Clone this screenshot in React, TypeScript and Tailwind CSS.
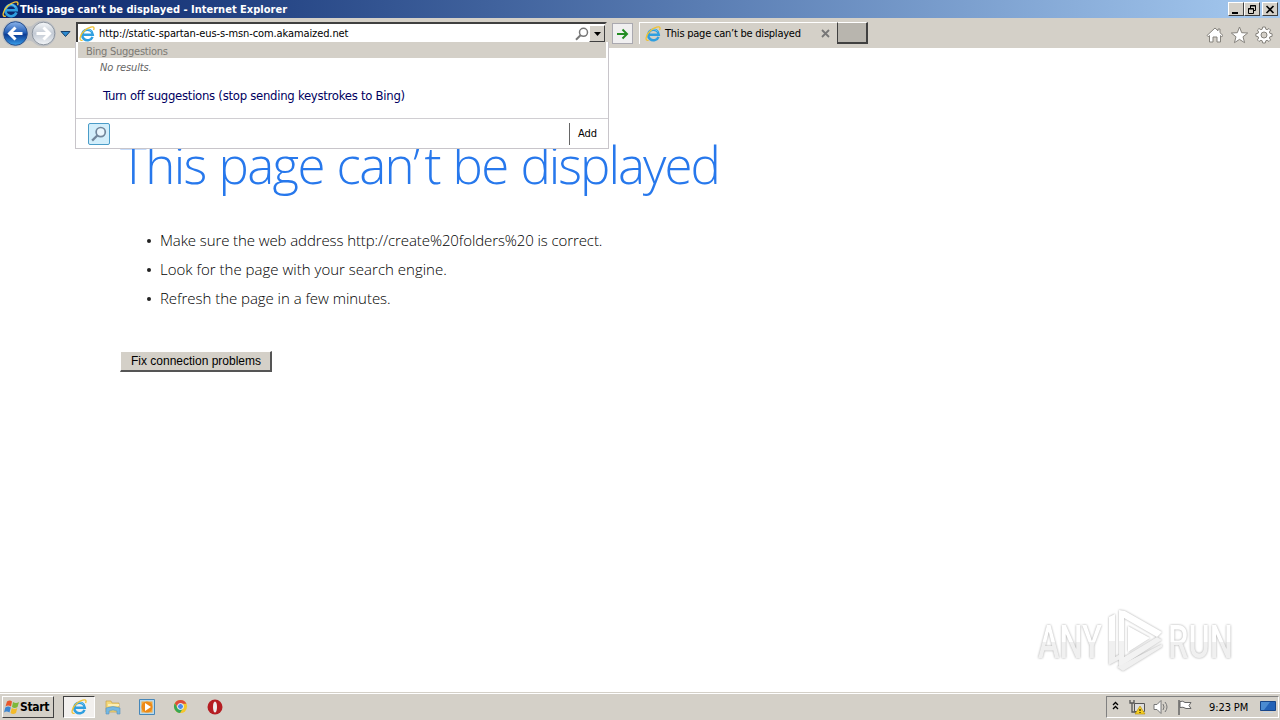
import React from "react";

const IeIcon = ({ size = 16 }: { size?: number }) => (
  <svg width={size} height={size} viewBox="0 0 16 16" className="shrink-0">
    <path d="M13.500 10.800A5.300 5.300 0 1 1 13.800 8.700H4.500" fill="none" stroke="#2f9fe0" strokeWidth="2.500" />
    <path d="M12.600 5.600A5 5 0 0 0 4 6" fill="none" stroke="#8ad4f8" strokeWidth="0.8" />
    <path d="M3.600 14.300C-.6 15.500.6 9 5.600 4.500C9.800.8 14.600-.2 15 1.900C15.100 2.600 14.900 3.300 14.600 4" fill="none" stroke="#f0c233" strokeWidth="1.300" />
  </svg>
);

const NavArrows = () => (
  <svg width="74" height="30" viewBox="0 0 74 30" className="shrink-0">
    <defs>
      <linearGradient id="back" x1="0" y1="0" x2="0" y2="1">
        <stop offset="0" stopColor="#8cb4ea" />
        <stop offset=".45" stopColor="#2560b8" />
        <stop offset=".55" stopColor="#0c3c94" />
        <stop offset="1" stopColor="#39a0ec" />
      </linearGradient>
      <linearGradient id="fwd" x1="0" y1="0" x2="0" y2="1">
        <stop offset="0" stopColor="#f6f8fa" />
        <stop offset=".5" stopColor="#c3cad4" />
        <stop offset="1" stopColor="#f2f5f8" />
      </linearGradient>
    </defs>
    <path d="M2 15a13 13 0 0 1 23-8q4 3 8 0a13 13 0 1 1 0 17q-4-3-8 0a13 13 0 0 1-23-9" fill="#bfc1c4" />
    <circle cx="15.5" cy="15.5" r="11.8" fill="url(#back)" stroke="#264f8d" />
    <circle cx="43.5" cy="15.5" r="11.3" fill="url(#fwd)" stroke="#8e96a0" />
    <path d="M22.500 15.500H10M15.500 9.500l-6 6 6 6" fill="none" stroke="#fff" strokeWidth="3" />
    <path d="M36.500 15.500H49M43.500 9.500l6 6-6 6" fill="none" stroke="#fff" strokeWidth="3" />
    <path d="M61 13.500h9l-4.500 5z" fill="#2c8ad0" stroke="#173e68" />
  </svg>
);

const Search = ({ color, fill = "none", size = 14 }: { color: string; fill?: string; size?: number }) => (
  <svg width={size} height={size} viewBox="0 0 14 14">
    <circle cx="8.5" cy="5.3" r="4" fill={fill} stroke={color} strokeWidth="1.5" />
    <path d="M5.500 8.300L1 12.800" stroke={color} strokeWidth="2" />
  </svg>
);

const caption =
  "h-[14px] w-4 bg-[#d4d0c8] border border-t-white border-l-white border-r-[#404040] border-b-[#404040] flex items-center justify-center";

const TitleBar = () => (
  <div className="flex h-[18px] items-center bg-linear-to-r from-[#0a246a] to-[#a6caf0] pl-0.5 pr-0.5">
    <IeIcon size={17} />
    <span className="ml-px whitespace-nowrap pt-px font-['DejaVu_Sans_Condensed','DejaVu_Sans',sans-serif] text-[11px] font-bold leading-[17px] tracking-[0.01px] text-white">
      This page can’t be displayed - Internet Explorer
    </span>
    <div className="ml-auto flex">
      <div className={caption}>
        <svg width="12" height="11"><path d="M2 8h6v2H2z" /></svg>
      </div>
      <div className={caption}>
        <svg width="12" height="11" fill="none" stroke="#000">
          <path d="M4.500 4V1.500h5v5H8M4 2h6M2.500 4.500h5v5h-5zM2 5h6" />
        </svg>
      </div>
      <div className={`${caption} ml-0.5`}>
        <svg width="12" height="11" stroke="#000" strokeWidth="1.6"><path d="M2.500 2l7 7M9.500 2l-7 7" /></svg>
      </div>
    </div>
  </div>
);

const Toolbar = () => (
  <div className="flex h-[30px] bg-[#d4d0c8]">
    <NavArrows />
    <div className="ml-0.5 mt-1 flex h-[21px] w-[531px] items-center border-2 border-b-0 border-[#404040] border-r-[#d4d0c8] bg-white">
      <span className="ml-px"><IeIcon /></span>
      <span className="ml-1 whitespace-nowrap pt-0.5 text-[11px] tracking-[-0.1px] text-black">
        http://static-spartan-eus-s-msn-com.akamaized.net
      </span>
      <span className="ml-auto"><Search color="#777" /></span>
      <div className="flex h-[17px] w-4 items-center justify-center border border-b-[#404040] border-l-white border-r-[#404040] border-t-white bg-[#d4d0c8]">
        <svg width="7" height="4"><path d="M0 0h7L3.500 4z" /></svg>
      </div>
    </div>
    <div className="ml-[5px] mt-[5px] flex size-[21px] items-center justify-center border border-[#aaa9b0] bg-[#f0eff0]">
      <svg width="13" height="12" fill="none" stroke="#238c22" strokeWidth="2"><path d="M1 6h10M6.500 1.500L11 6l-4.500 4.500" /></svg>
    </div>
    <div className="ml-[6px] mt-1 flex h-[22px] w-[198px] items-center border-l border-t border-white pl-[5px]">
      <IeIcon />
      <span className="ml-1 whitespace-nowrap pt-0.5 text-[11px] tracking-[-0.23px]">This page can’t be displayed</span>
      <svg className="ml-auto mr-[7px]" width="9" height="9" stroke="#777" strokeWidth="1.8"><path d="M1 1l7 7M8 1L1 8" /></svg>
    </div>
    <div className="mt-1 h-[22px] w-[31px] border-b-2 border-l border-r-2 border-t border-[#404040] border-t-white bg-[#b8b5ae]" />
    <svg className="ml-auto mr-[6px] mt-[8px]" width="68" height="18" viewBox="0 0 68 18" fill="#fff" stroke="#85827c" strokeWidth="1">
      <path d="M1 9.500L9 2l3 2.800V3h2v3.700l3 2.800-1.200 1.200-1.300-1.100V16H11v-5H7v5H3.500V9.600L2.200 10.700z" />
      <path d="M33.500 1l2.200 5.700 6 .3-4.700 3.800 1.600 5.900-5.100-3.300-5.100 3.300 1.600-5.900-4.700-3.800 6-.3z" />
      <g transform="translate(58 9)">
        <path d="M-1.300-8h2.600l.5 2.200 1.300.5L5-6.500 6.600-4.900 5.400-3l.5 1.300 2.200.5v2.500l-2.200.5L5.400 3l1.200 1.900L5 6.500 3.100 5.300l-1.300.5L1.300 8h-2.600l-.5-2.200-1.300-.5L-5 6.500-6.600 4.900-5.400 3l-.5-1.300-2.200-.5v-2.500l2.200-.5L-5.400-3l-1.200-1.900L-5-6.500l1.900 1.200 1.300-.5z" />
        <circle r="3" fill="#d4d0c8" />
      </g>
    </svg>
  </div>
);

const Suggestions = () => (
  <div className="absolute left-[75px] top-[42px] flex h-[107px] w-[534px] flex-col border border-t-0 border-[#c8c5ca] bg-white text-[11px]">
    <div className="ml-0.5 mr-0.5 h-4 bg-[#d4d0c8] pl-2 leading-[20px] tracking-[-0.25px] text-[#7b7974]">Bing Suggestions</div>
    <div className="h-[18px] pl-6 leading-[20px] italic tracking-[-0.15px] text-[#666]">No results.</div>
    <div className="flex h-[42px] items-center pb-0.5 pl-[27px] text-[13px] tracking-[-0.28px] text-[#00005f]">
      Turn off suggestions (stop sending keystrokes to Bing)
    </div>
    <div className="flex flex-1 items-center border-t border-[#d0ced2] pl-3">
      <div className="flex size-[22px] items-center justify-center rounded-[2px] border border-[#4a9cc8] bg-[#d2eefb]">
        <Search color="#71869b" fill="#e9f6fd" size={16} />
      </div>
      <div className="ml-auto flex h-[22px] w-[39px] items-center border-l border-[#666] pl-2 pt-0.5 text-black">Add</div>
    </div>
  </div>
);

const tips = [
  { text: "Make sure the web address http://create%20folders%20 is correct.", tracking: "tracking-[-0.1px]" },
  { text: "Look for the page with your search engine.", tracking: "tracking-[0.01px]" },
  { text: "Refresh the page in a few minutes.", tracking: "tracking-[-0.04px]" },
];

const ErrorPage = () => (
  <main className="h-[644px] bg-white pl-[120px] pt-[82px]">
    <h1 className="whitespace-nowrap font-['Open_Sans',sans-serif] text-[51px] font-light leading-[69px] tracking-[-1.6px] text-[#2778ec] [word-spacing:1px]">
      This page can<span className="tracking-[4px]">’</span>t be <span className="tracking-[-2px]">displayed</span>
    </h1>
    <ul className="mt-[27px] font-['Open_Sans',sans-serif] text-[15px] font-light leading-[29px] text-black">
      {tips.map((tip) => (
        <li key={tip.text} className="flex items-center">
          <span className="ml-[27px] mr-[9px] size-1 rounded-full bg-[#222]" />
          <span className={`whitespace-nowrap ${tip.tracking}`}>{tip.text}</span>
        </li>
      ))}
    </ul>
    <button className="mt-[38px] h-[21px] w-[152px] border border-b-2 border-r-2 border-b-[#555] border-l-white border-r-[#555] border-t-white bg-[#d4d0c8] pl-px font-['Liberation_Sans',sans-serif] text-[12px] leading-[17px]">
      Fix connection problems
    </button>
  </main>
);

const word =
  "inline-block origin-left scale-x-[0.69] bg-linear-to-b from-white from-50% to-[#f0f0f0] to-52% bg-clip-text text-transparent";

const Watermark = () => (
  <div className="absolute left-[1038px] top-[608px] flex h-[66px] items-center font-['Roboto',sans-serif] text-[47px] font-medium leading-none drop-shadow-[0_0_1px_#a8a8a8]">
    <span className="w-[67px]"><span className={word}>ANY</span></span>
    <svg className="shrink-0" width="60" height="66" viewBox="0 0 60 66" strokeLinejoin="round">
      <path d="M4 9l6-3v44l-6 6z" fill="#fff" />
      <path d="M4 33h6v16l7-4v5L4 57z" fill="#f0f0f0" />
      <path d="M14 2l6 1 37 21-5 5-33-19v39l-5 3z" fill="#fff" />
      <path d="M14 33h5v16l33-20 5 3-39 25-4 2z" fill="#f2f2f2" />
      <path d="M57 36v3L18 63l-6-4z" fill="#f0f0f0" />
      <path d="M23 18l22 12-22 14z" fill="#fff" />
    </svg>
    <span className="ml-[3px]"><span className={word}>RUN</span></span>
  </div>
);

const Taskbar = () => (
  <footer className="flex h-7 items-start border-t border-[#d4d0c8] bg-[#d4d0c8] pt-[3px] shadow-[inset_0_1px_0_#fff]">
    <div className="ml-0.5 flex h-[22px] w-[52px] items-center border border-b-[#404040] border-l-white border-r-[#404040] border-t-white pl-px">
      <svg width="16" height="16" viewBox="0 0 16 16">
        <path d="M3 2.500q3-2 5 0L7 7.500Q4 5.500 1.500 7.500z" fill="#e9572b" />
        <path d="M9 3q3 2 6 0l-1.500 5q-3 2-5.500 0z" fill="#7eb83b" />
        <path d="M1.300 8.500q3-2 5.500 0l-1.300 5q-3-2-5.500 0z" fill="#3d86d1" />
        <path d="M7.800 9q3 2 5.500 0L12 14q-3 2-5.500 0z" fill="#f4bb2a" />
      </svg>
      <span className="pb-px font-['DejaVu_Sans_Condensed','DejaVu_Sans',sans-serif] text-[12px] font-bold tracking-[-0.35px]">Start</span>
    </div>
    <div className="ml-[9px] flex h-[22px] w-8 items-center justify-center border border-b-white border-l-[#404040] border-r-white border-t-[#404040] bg-[#f2f0ee]">
      <IeIcon />
    </div>
    <svg className="ml-[10px] mt-[3px]" width="16" height="16" viewBox="0 0 16 16">
      <path d="M1 2h5l1 2h7v9H1z" fill="#f3d879" stroke="#c5a24b" strokeWidth=".7" />
      <path d="M3 5h11v2H3z" fill="#fbeeb4" />
      <path d="M1 9q7-3 14 0v6h-3v-3q-4-2-8 0v3H1z" fill="#73b8e3" stroke="#5892bd" strokeWidth=".6" />
    </svg>
    <svg className="ml-[18px] mt-[3px]" width="16" height="16" viewBox="0 0 16 16">
      <path d="M.5.5h15v15H.5z" fill="#b8d9ed" stroke="#4687b9" />
      <path d="M2.500 2.500h11v11h-11z" fill="#f5a83c" />
      <circle cx="8" cy="8" r="5.500" fill="#ed8a17" />
      <path d="M6 4l6 4-6 4z" fill="#fff" />
    </svg>
    <svg className="ml-[18px] mt-[3px]" width="15" height="15" viewBox="0 0 16 16">
      <circle cx="8" cy="8" r="7" fill="#f5c62c" />
      <path d="M2 4.500A7 7 0 0 1 14.300 5H8L5 9z" fill="#dd4b3b" />
      <path d="M2 4.500A7 7 0 0 0 7.500 15l3-5H5z" fill="#36a657" />
      <circle cx="8" cy="8" r="3.2" fill="#4c8bea" stroke="#fff" />
    </svg>
    <svg className="ml-[19px] mt-[3px]" width="16" height="16" viewBox="0 0 16 16">
      <circle cx="8" cy="8" r="7.500" fill="#b51d22" />
      <ellipse cx="8" cy="8" rx="2" ry="5.500" fill="#eee" />
    </svg>
    <div className="ml-auto mr-px flex h-[22px] w-[173px] items-center border border-b-white border-l-[#808080] border-r-white border-t-[#808080] pl-[5px]">
      <svg width="7" height="10" className="mb-0.5" fill="none" stroke="#000" strokeWidth="1.3"><path d="M1 4l2.500-2.500L6 4M1 8l2.500-2.500L6 8" /></svg>
      <svg className="ml-[10px]" width="17" height="16" viewBox="0 0 17 16">
        <path d="M5.500 4.500h10v8h-10z" fill="#ddd" stroke="#555" />
        <path d="M1 1v3h4V1M3 4v9h5" fill="none" stroke="#555" strokeWidth="1.3" />
        <path d="M11 7l5 8H6z" fill="#f6ce22" stroke="#b28c08" strokeWidth=".6" />
        <path d="M11 10v2m0 1v1" stroke="#000" />
      </svg>
      <svg className="ml-[7px]" width="17" height="16" viewBox="0 0 17 16" fill="#fff" stroke="#777">
        <path d="M1 5.500h3l4-4v13l-4-4H1z" />
        <path d="M10 5q2 3 0 6M12 3q4 5 0 10" fill="none" />
      </svg>
      <svg className="ml-[7px]" width="17" height="16" viewBox="0 0 17 16" fill="#fff" stroke="#666">
        <path d="M2 1v15" strokeWidth="1.5" />
        <path d="M3 2.500q3-1 5 1h6l-2 3 2 3H9q-3-2-6-1z" />
      </svg>
      <span className="ml-[15px] whitespace-nowrap pt-0.5 text-[11px] tracking-[-0.1px]">9:23 PM</span>
      <svg className="ml-auto mr-0.5" width="16" height="13" viewBox="0 0 16 13">
        <path d="M.5.500h15v9H.500z" fill="#2362b7" stroke="#174588" />
        <path d="M1 1h9L4 9H1z" fill="#4b8bd1" />
        <path d="M3 11h10v1H3z" fill="#c6d5e4" />
      </svg>
    </div>
  </footer>
);

const App: React.FC = () => {
  return (
    <div className="relative h-[720px] w-[1280px] overflow-hidden bg-white font-['DejaVu_Sans_Condensed','DejaVu_Sans',sans-serif] text-black">
      <TitleBar />
      <Toolbar />
      <ErrorPage />
      <Taskbar />
      <Suggestions />
      <Watermark />
    </div>
  );
};

export default App;
